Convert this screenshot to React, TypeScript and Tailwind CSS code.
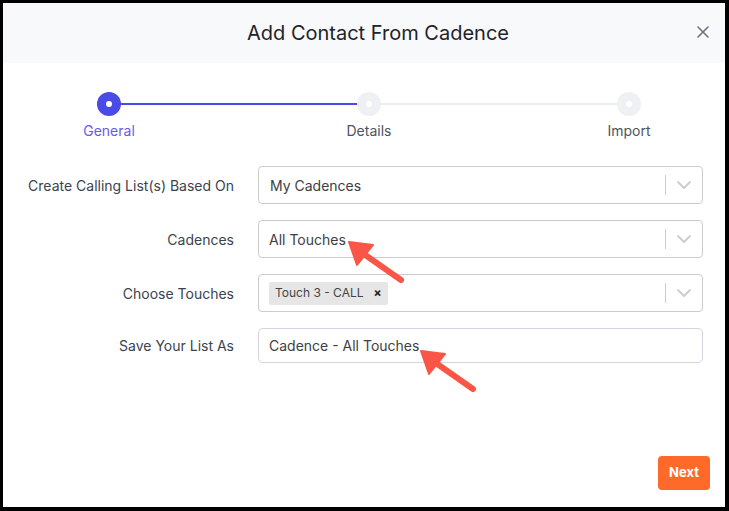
import React from 'react';

const steps = [
  { name: 'General', active: true },
  { name: 'Details', active: false },
  { name: 'Import', active: false },
];

function Chevron() {
  return (
    <div className="flex items-center h-full">
      <span className="w-px h-[20px] bg-[#cccccc]" />
      <svg width="36" height="20" viewBox="0 0 36 20" className="text-[#cccccc]">
        <path d="M12 7 L18 13 L24 7" fill="none" stroke="currentColor" strokeWidth="1.8" strokeLinecap="round" strokeLinejoin="round" />
      </svg>
    </div>
  );
}

function Arrow({ className }: { className: string }) {
  return (
    <svg width="64" height="50" viewBox="0 0 64 50" className={`absolute pointer-events-none ${className}`}>
      <line x1="18" y1="16" x2="58" y2="44" stroke="#fa5647" strokeWidth="6" strokeLinecap="round" />
      <polygon points="6,6 30,9 14,29" fill="#fa5647" stroke="#fa5647" strokeWidth="2" strokeLinejoin="round" />
    </svg>
  );
}

function Row({ label, children }: { label: string; children: React.ReactNode }) {
  return (
    <div className="flex items-center">
      <div className="w-[231px] text-right text-[14px] text-[#3b4350]">{label}</div>
      <div className="ml-[24px] w-[445px]">{children}</div>
    </div>
  );
}

export default function App() {
  return (
    <div className="w-[729px] h-[511px] bg-black p-[3px] pr-[4px] pb-[4px]" style={{ fontFamily: 'Inter, "Noto Sans", sans-serif' }}>
      <div className="relative w-full h-full bg-white flex flex-col">
        <div className="h-[60px] bg-[#f8f9fb] flex items-center justify-center relative pl-[28px]">
          <h2 className="text-[20px] text-[#1f2329] font-normal">Add Contact From Cadence</h2>
          <button className="absolute right-[14px] top-[21px] text-[#6b7280]">
            <svg width="16" height="16" viewBox="0 0 16 16">
              <path d="M3 3 L13 13 M13 3 L3 13" stroke="currentColor" strokeWidth="1.6" strokeLinecap="round" />
            </svg>
          </button>
        </div>

        <div className="relative ml-[69px] mr-[59px] mt-[29px] h-[48px]">
          <div className="absolute left-[37px] right-[37px] top-[11px] h-[2px] flex">
            <div className="flex-1 bg-[#4a4ae6]" />
            <div className="flex-1 bg-[#ececf1]" />
          </div>
          <div className="flex justify-between relative">
            {steps.map(s => (
              <div key={s.name} className="flex flex-col items-center w-[74px]">
                <div className={`w-[24px] h-[24px] rounded-full flex items-center justify-center ${s.active ? 'bg-[#4a4ae6]' : 'bg-[#eef0f4]'}`}>
                  <span className="w-[6px] h-[6px] rounded-full bg-white" />
                </div>
                <span className={`mt-[4px] text-[14px] ${s.active ? 'text-[#6a5ae8]' : 'text-[#4b5563]'}`}>{s.name}</span>
              </div>
            ))}
          </div>
        </div>

        <div className="mt-[26px] flex flex-col gap-[16px]">
          <Row label="Create Calling List(s) Based On">
            <div className="h-[38px] border border-[#cccccc] rounded-[4px] flex items-center justify-between pl-[11px]">
              <span className="text-[14px] text-[#404040]">My Cadences</span>
              <Chevron />
            </div>
          </Row>
          <Row label="Cadences">
            <div className="h-[38px] border border-[#cccccc] rounded-[4px] flex items-center justify-between pl-[10px]">
              <span className="text-[14px] text-[#404040]">All Touches</span>
              <Chevron />
            </div>
          </Row>
          <Row label="Choose Touches">
            <div className="h-[38px] border border-[#cccccc] rounded-[4px] flex items-center justify-between pl-[10px]">
              <span className="h-[23px] bg-[#e6e6e6] rounded-[2px] flex items-center pl-[6px] pr-[6px] text-[12px] text-[#444444]">
                Touch 3 - CALL
                <span className="ml-[10px] text-[12px] font-bold text-[#222222]">×</span>
              </span>
              <Chevron />
            </div>
          </Row>
          <Row label="Save Your List As">
            <div className="h-[35px] border border-[#d4d4e0] rounded-[5px] flex items-center pl-[10px]">
              <span className="text-[14px] text-[#404040]">Cadence - All Touches</span>
            </div>
          </Row>
        </div>

        <div className="flex-1" />
        <div className="flex justify-end pr-[15px] pb-[17px]">
          <button className="h-[34px] px-[11px] rounded-[4px] bg-[#ff6a2b] text-white text-[13px] font-bold">Next</button>
        </div>

        <Arrow className="left-[340px] top-[233px]" />
        <Arrow className="left-[412px] top-[342px]" />
      </div>
    </div>
  );
}
